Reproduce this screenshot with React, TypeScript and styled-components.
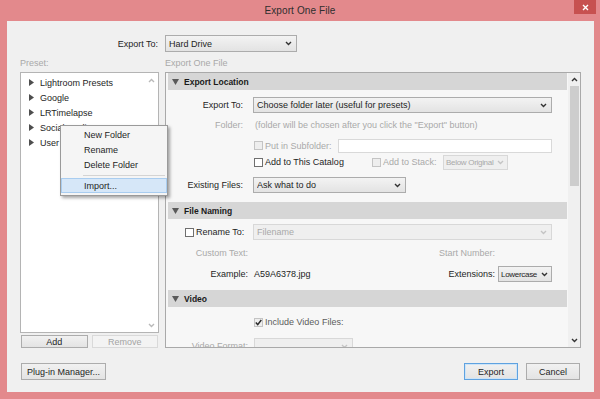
import React from 'react';
import styled, { createGlobalStyle } from 'styled-components';

const Global = createGlobalStyle`
  html, body { margin: 0; padding: 0; }
  body {
    width: 600px; height: 399px; overflow: hidden;
    font-family: "Liberation Sans", Arial, sans-serif;
    font-size: 9px; color: #1e1e1e;
  }
  * { box-sizing: border-box; }
`;

const Window = styled.div`
  width: 600px; height: 399px;
  background: #e3898c;
  display: flex; flex-direction: column;
`;

const TitleBar = styled.div`
  height: 21px; flex: none;
  display: grid; grid-template-columns: 1fr auto 1fr;
  align-items: center;
`;

const Title = styled.div`
  grid-column: 2;
  font-size: 10px; color: #2e2e2e; letter-spacing: 0.1px;
`;

const CloseBtn = styled.div`
  grid-column: 3; justify-self: end; align-self: start;
  width: 22px; height: 14px; margin-right: 4px;
  background: #c75150;
  display: flex; align-items: center; justify-content: center;
`;

const Client = styled.div`
  flex: 1;
  margin: 0 6px 7px 7px;
  background: #f0f0f0;
  padding: 14px 13px 12px 13px;
  display: flex; flex-direction: column;
`;

const TopRow = styled.div`
  height: 17px; display: flex; align-items: center;
`;

const TopLabel = styled.div`
  width: 138px; margin-right: 7px; text-align: right;
`;

const CaptionRow = styled.div`
  height: 20px; padding-bottom: 4px;
  display: grid; grid-template-columns: 139px 416px; column-gap: 6px;
  align-items: end; color: #a9a9a9;
`;

const Main = styled.div`
  height: 276px;
  display: grid; grid-template-columns: 139px 416px; column-gap: 6px;
`;

const LeftCol = styled.div`
  position: relative; display: flex; flex-direction: column;
`;

const ListBox = styled.div`
  height: 261px; background: #fff;
  border: 1px solid #b4b4b4;
  display: flex;
`;

const Tree = styled.div`
  flex: 1; padding-top: 2px;
`;

const TreeRow = styled.div`
  height: 15px; display: flex; align-items: center; gap: 6px;
  padding-left: 8px; white-space: nowrap;
`;

const ListScroll = styled.div`
  width: 14px; display: flex; flex-direction: column;
  justify-content: space-between; align-items: center;
  padding: 5px 0 4px;
`;

const SmallBtnRow = styled.div`
  margin-top: 2px; height: 13px; padding: 0 1px;
  display: flex; gap: 4px;
`;

const Button = styled.div<{ $disabled?: boolean; $default?: boolean; $w?: number }>`
  ${p => (p.$w ? `width: ${p.$w}px;` : 'flex: 1;')}
  display: flex; align-items: center; justify-content: center;
  border: 1px solid ${p => (p.$disabled ? '#d9d9d9' : p.$default ? '#5fa2e0' : '#acacac')};
  background: ${p => (p.$disabled ? '#f3f3f3' : 'linear-gradient(#f1f1f1, #e3e3e3)')};
  color: ${p => (p.$disabled ? '#a3a3a3' : '#1e1e1e')};
  white-space: nowrap;
  box-shadow: ${p => (p.$default ? 'inset 0 0 0 1px #cde4f7' : 'none')};
`;

const Menu = styled.div`
  position: absolute; left: 40px; top: 53px;
  width: 108px; height: 71px;
  background: #f5f5f5;
  border: 1px solid #9a9a9a;
  box-shadow: 2px 2px 3px rgba(0, 0, 0, 0.35);
  padding-top: 1px;
`;

const MenuItem = styled.div<{ $hot?: boolean }>`
  height: 15px; display: flex; align-items: center;
  padding-left: 22px;
  border: 1px solid ${p => (p.$hot ? '#a9cdf0' : 'transparent')};
  background: ${p => (p.$hot ? '#d6e7f8' : 'transparent')};
`;

const MenuSep = styled.div`
  height: 6px; margin-left: 22px; margin-right: 2px;
  display: flex; align-items: center;
  &::after { content: ''; flex: 1; height: 1px; background: #d4d4d4; }
`;

const Panel = styled.div`
  border: 1px solid #a9a9a9; background: #f7f7f7;
  display: flex; overflow: hidden;
`;

const PanelContent = styled.div`
  flex: 1; overflow: hidden; padding: 0 1px 0 2px;
`;

const SectionHeader = styled.div`
  height: 17px; background: #d6d6d6;
  display: flex; align-items: center; gap: 5px;
  padding-left: 4px;
  font-weight: bold; font-size: 8.5px; color: #1a1a1a;
`;

const SectionBody = styled.div<{ $pb: number }>`
  padding: 0 15px ${p => p.$pb}px 0;
  display: flex; flex-direction: column;
`;

const Row = styled.div<{ $mt: number; $h: number; $indent?: number }>`
  margin-top: ${p => p.$mt}px; height: ${p => p.$h}px;
  padding-left: ${p => p.$indent ?? 0}px;
  display: flex; align-items: center; white-space: nowrap;
`;

const Label = styled.div<{ $w: number; $gap: number; $dim?: boolean }>`
  width: ${p => p.$w}px; margin-right: ${p => p.$gap}px; flex: none;
  text-align: right;
  color: ${p => (p.$dim ? '#a9a9a9' : '#1e1e1e')};
`;

const Text = styled.span<{ $dim?: boolean; $mid?: boolean; $pl?: number }>`
  color: ${p => (p.$dim ? '#a9a9a9' : p.$mid ? '#5c5c5c' : '#1e1e1e')};
  padding-left: ${p => p.$pl ?? 0}px;
`;

const Group = styled.div<{ $w: number }>`
  width: ${p => p.$w}px; flex: none;
  display: flex; align-items: center; gap: 2px;
`;

const Spacer = styled.div<{ $w?: number }>`
  ${p => (p.$w ? `width: ${p.$w}px; flex: none;` : 'flex: 1;')}
`;

const Select = styled.div<{ $w?: number; $h?: number; $disabled?: boolean; $tight?: boolean }>`
  ${p => (p.$w ? `width: ${p.$w}px; flex: none;` : 'flex: 1;')}
  height: ${p => p.$h ?? 16}px;
  display: flex; align-items: center; gap: ${p => (p.$tight ? 2 : 3)}px;
  padding: 0 ${p => (p.$tight ? 3 : 4)}px 0 ${p => (p.$tight ? 2 : 3)}px; white-space: nowrap;
  border: 1px solid ${p => (p.$disabled ? '#d8d8d8' : '#acacac')};
  background: ${p => (p.$disabled ? '#efefef' : 'linear-gradient(#f3f3f3, #e3e3e3)')};
  color: ${p => (p.$disabled ? '#a9a9a9' : '#1e1e1e')};
  font-size: ${p => (p.$tight ? 8 : 9)}px;
  letter-spacing: ${p => (p.$tight ? '-0.3px' : '0')};
  & > span { flex: 1; min-width: 0; overflow: hidden; }
  & > svg { flex: none; }
`;

const TextInput = styled.div`
  flex: 1; height: 14px; background: #fff; border: 1px solid #d9d9d9;
`;

const Box = styled.div<{ $disabled?: boolean }>`
  width: 9px; height: 9px; flex: none;
  border: 1px solid ${p => (p.$disabled ? '#c4c4c4' : '#6f6f6f')};
  background: ${p => (p.$disabled ? '#eeeeee' : '#ffffff')};
  display: flex; align-items: center; justify-content: center;
`;

const PanelScroll = styled.div`
  width: 12px; flex: none; background: #f0f0f0;
  display: flex; flex-direction: column; align-items: center;
`;

const ArrowCell = styled.div<{ $h: number }>`
  height: ${p => p.$h}px; width: 100%;
  display: flex; align-items: center; justify-content: center;
`;

const Thumb = styled.div`
  width: 9px; height: 100px; background: #cdcdcd;
`;

const BottomRow = styled.div`
  margin-top: 15px; height: 17px; padding: 0 1px;
  display: flex; gap: 8px;
`;

const Chevron = ({ up, color = '#333' }: { up?: boolean; color?: string }) => (
  <svg width="7" height="5" viewBox="0 0 7 5">
    <path d={up ? 'M1 4 L3.5 1.5 L6 4' : 'M1 1 L3.5 3.5 L6 1'} fill="none" stroke={color} strokeWidth="1.4" />
  </svg>
);

const TriRight = () => (
  <svg width="5" height="7" viewBox="0 0 5 7"><path d="M0 0 L5 3.5 L0 7Z" fill="#4e4e4e" /></svg>
);

const TriDown = () => (
  <svg width="7" height="6" viewBox="0 0 7 6"><path d="M0 0 H7 L3.5 6Z" fill="#5a5a5a" /></svg>
);

const Check = () => (
  <svg width="7" height="7" viewBox="0 0 7 7">
    <path d="M0.8 3.6 L2.7 5.6 L6.3 1" fill="none" stroke="#2a2a2a" strokeWidth="1.5" />
  </svg>
);

const presets = ['Lightroom Presets', 'Google', 'LRTimelapse', 'Social Media', 'User Presets'];

export default function App() {
  return (
    <>
      <Global />
      <Window>
        <TitleBar>
          <Title>Export One File</Title>
          <CloseBtn>
            <svg width="7" height="7" viewBox="0 0 7 7">
              <path d="M1 1 L6 6 M6 1 L1 6" stroke="#fff" strokeWidth="1.4" />
            </svg>
          </CloseBtn>
        </TitleBar>
        <Client>
          <TopRow>
            <TopLabel>Export To:</TopLabel>
            <Select $w={132} $h={17}>
              <span>Hard Drive</span>
              <Chevron />
            </Select>
          </TopRow>
          <CaptionRow>
            <div>Preset:</div>
            <div>Export One File</div>
          </CaptionRow>
          <Main>
            <LeftCol>
              <ListBox>
                <Tree>
                  {presets.map(p => (
                    <TreeRow key={p}>
                      <TriRight />
                      <span>{p}</span>
                    </TreeRow>
                  ))}
                </Tree>
                <ListScroll>
                  <Chevron up color="#b9b9b9" />
                  <Chevron color="#b9b9b9" />
                </ListScroll>
              </ListBox>
              <SmallBtnRow>
                <Button>Add</Button>
                <Button $disabled>Remove</Button>
              </SmallBtnRow>
              <Menu>
                <MenuItem>New Folder</MenuItem>
                <MenuItem>Rename</MenuItem>
                <MenuItem>Delete Folder</MenuItem>
                <MenuSep />
                <MenuItem $hot>Import...</MenuItem>
              </Menu>
            </LeftCol>
            <Panel>
              <PanelContent>
                <SectionHeader><TriDown />Export Location</SectionHeader>
                <SectionBody $pb={9}>
                  <Row $mt={7} $h={16}>
                    <Label $w={75} $gap={10}>Export To:</Label>
                    <Select>
                      <span>Choose folder later (useful for presets)</span>
                      <Chevron />
                    </Select>
                  </Row>
                  <Row $mt={5} $h={14}>
                    <Label $w={75} $gap={10} $dim>Folder:</Label>
                    <Text $dim $pl={2}>(folder will be chosen after you click the "Export" button)</Text>
                  </Row>
                  <Row $mt={6} $h={15} $indent={86}>
                    <Group $w={84}>
                      <Box $disabled />
                      <Text $dim>Put in Subfolder:</Text>
                    </Group>
                    <TextInput />
                  </Row>
                  <Row $mt={1} $h={16} $indent={86}>
                    <Group $w={118}>
                      <Box />
                      <Text>Add to This Catalog</Text>
                    </Group>
                    <Group $w={71}>
                      <Box $disabled />
                      <Text $dim>Add to Stack:</Text>
                    </Group>
                    <Select $w={65} $h={15} $disabled $tight>
                      <span>Below Original</span>
                      <Chevron color="#c4c4c4" />
                    </Select>
                  </Row>
                  <Row $mt={7} $h={16}>
                    <Label $w={75} $gap={10}>Existing Files:</Label>
                    <Select $w={153}>
                      <span>Ask what to do</span>
                      <Chevron />
                    </Select>
                  </Row>
                </SectionBody>

                <SectionHeader><TriDown />File Naming</SectionHeader>
                <SectionBody $pb={8}>
                  <Row $mt={5} $h={16} $indent={17}>
                    <Group $w={68}>
                      <Box />
                      <Text>Rename To:</Text>
                    </Group>
                    <Select $disabled>
                      <span>Filename</span>
                      <Chevron color="#c4c4c4" />
                    </Select>
                  </Row>
                  <Row $mt={6} $h={14}>
                    <Label $w={80} $gap={6} $dim>Custom Text:</Label>
                    <Spacer />
                    <Text $dim>Start Number:</Text>
                    <Spacer $w={57} />
                  </Row>
                  <Row $mt={6} $h={16}>
                    <Label $w={80} $gap={6}>Example:</Label>
                    <Text>A59A6378.jpg</Text>
                    <Spacer />
                    <Text>Extensions:</Text>
                    <Spacer $w={3} />
                    <Select $w={54} $tight>
                      <span>Lowercase</span>
                      <Chevron />
                    </Select>
                  </Row>
                </SectionBody>

                <SectionHeader><TriDown />Video</SectionHeader>
                <SectionBody $pb={8}>
                  <Row $mt={7} $h={16} $indent={86}>
                    <Group $w={120}>
                      <Box $disabled><Check /></Box>
                      <Text $mid>Include Video Files:</Text>
                    </Group>
                  </Row>
                  <Row $mt={8} $h={16}>
                    <Label $w={80} $gap={6} $dim>Video Format:</Label>
                    <Select $w={99} $disabled>
                      <span />
                      <Chevron color="#c4c4c4" />
                    </Select>
                  </Row>
                </SectionBody>
              </PanelContent>
              <PanelScroll>
                <ArrowCell $h={13}><Chevron up /></ArrowCell>
                <Thumb />
                <Spacer />
                <ArrowCell $h={13}><Chevron /></ArrowCell>
              </PanelScroll>
            </Panel>
          </Main>
          <BottomRow>
            <Button $w={85}>Plug-in Manager...</Button>
            <Spacer />
            <Button $w={54} $default>Export</Button>
            <Button $w={54}>Cancel</Button>
          </BottomRow>
        </Client>
      </Window>
    </>
  );
}
